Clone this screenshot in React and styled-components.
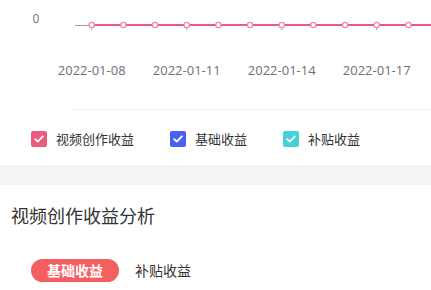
import styled, { createGlobalStyle } from 'styled-components';

const GlobalStyle = createGlobalStyle`
   body {
      margin: 0;
      background: #fff;
      font-family: "Noto Sans CJK SC", "Noto Sans", sans-serif;
   }
`;

const Page = styled.div`
   width: 431px;
   overflow: hidden;
`;

const ChartBox = styled.div`
   height: 109px;
   svg {
      display: block;
   }
`;

const Divider = styled.div`
   height: 1px;
   margin-left: 71px;
   background: #f1f1f1;
`;

const Legend = styled.div`
   display: flex;
   align-items: center;
   gap: 36px;
   height: 55px;
   padding: 3px 0 0 31px;
   box-sizing: border-box;
`;

const LegendItem = styled.label`
   display: flex;
   align-items: center;
   gap: 9px;
   font-size: 13px;
   color: #333;
   line-height: 16px;
`;

const Box = styled.span`
   width: 16px;
   height: 16px;
   border-radius: 2px;
   background: ${(p) => p.color};
   display: flex;
   align-items: center;
   justify-content: center;
`;

const Band = styled.div`
   height: 20px;
   background: #f5f5f5;
`;

const Section = styled.section`
   padding: 18px 0 0 11px;
`;

const Title = styled.h2`
   margin: 0;
   font-size: 18px;
   font-weight: 400;
   line-height: 25px;
   color: #333;
`;

const Tabs = styled.div`
   display: flex;
   margin: 31px 0 0 20px;
`;

const Tab = styled.button`
   border: 0;
   font-family: inherit;
   height: 23px;
   padding: 0 16px;
   border-radius: 12px;
   font-size: 14px;
   line-height: 23px;
   cursor: pointer;
   background: ${(p) => (p.active ? '#f65f62' : 'transparent')};
   color: ${(p) => (p.active ? '#fff' : '#333')};
   font-weight: ${(p) => (p.active ? 700 : 400)};
`;

const Check = () => (
   <svg width="10" height="8" viewBox="0 0 10 8">
      <path d="M1.2 4.2 L3.8 6.6 L8.8 1.4" fill="none" stroke="#fff" strokeWidth="1.8" strokeLinecap="round" strokeLinejoin="round" />
   </svg>
);

const points = Array.from({ length: 11 }, (_, i) => 91.7 + i * 31.67);
const labels = ['2022-01-08', '2022-01-11', '2022-01-14', '2022-01-17'];

const Chart = () => (
   <svg width="431" height="109">
      <text x="36" y="23" fontSize="12" fill="#6e7079" textAnchor="middle" fontFamily="Open Sans">0</text>
      <line x1="75" y1="25.5" x2="431" y2="25.5" stroke="#9a9ca3" strokeWidth="1" />
      {labels.map((l, i) => (
         <g key={l}>
            <line x1={points[i * 3]} y1="25" x2={points[i * 3]} y2="30" stroke="#9a9ca3" strokeWidth="1" />
            <text x={points[i * 3]} y="75" fontSize="13" fill="#6e7079" textAnchor="middle" fontFamily="Open Sans">{l}</text>
         </g>
      ))}
      <line x1={points[0]} y1="25" x2="431" y2="25" stroke="#ec5a7c" strokeWidth="2" />
      {points.map((x) => (
         <circle key={x} cx={x} cy="25" r="2.6" fill="#fff" stroke="#f18aa4" strokeWidth="1.4" />
      ))}
   </svg>
);

export default function App() {
   return (
      <Page>
         <GlobalStyle />
         <ChartBox>
            <Chart />
         </ChartBox>
         <Divider />
         <Legend>
            <LegendItem><Box color="#ec5a7c"><Check /></Box>视频创作收益</LegendItem>
            <LegendItem><Box color="#4b60ec"><Check /></Box>基础收益</LegendItem>
            <LegendItem><Box color="#44d2d6"><Check /></Box>补贴收益</LegendItem>
         </Legend>
         <Band />
         <Section>
            <Title>视频创作收益分析</Title>
            <Tabs>
               <Tab active>基础收益</Tab>
               <Tab>补贴收益</Tab>
            </Tabs>
         </Section>
      </Page>
   );
}
